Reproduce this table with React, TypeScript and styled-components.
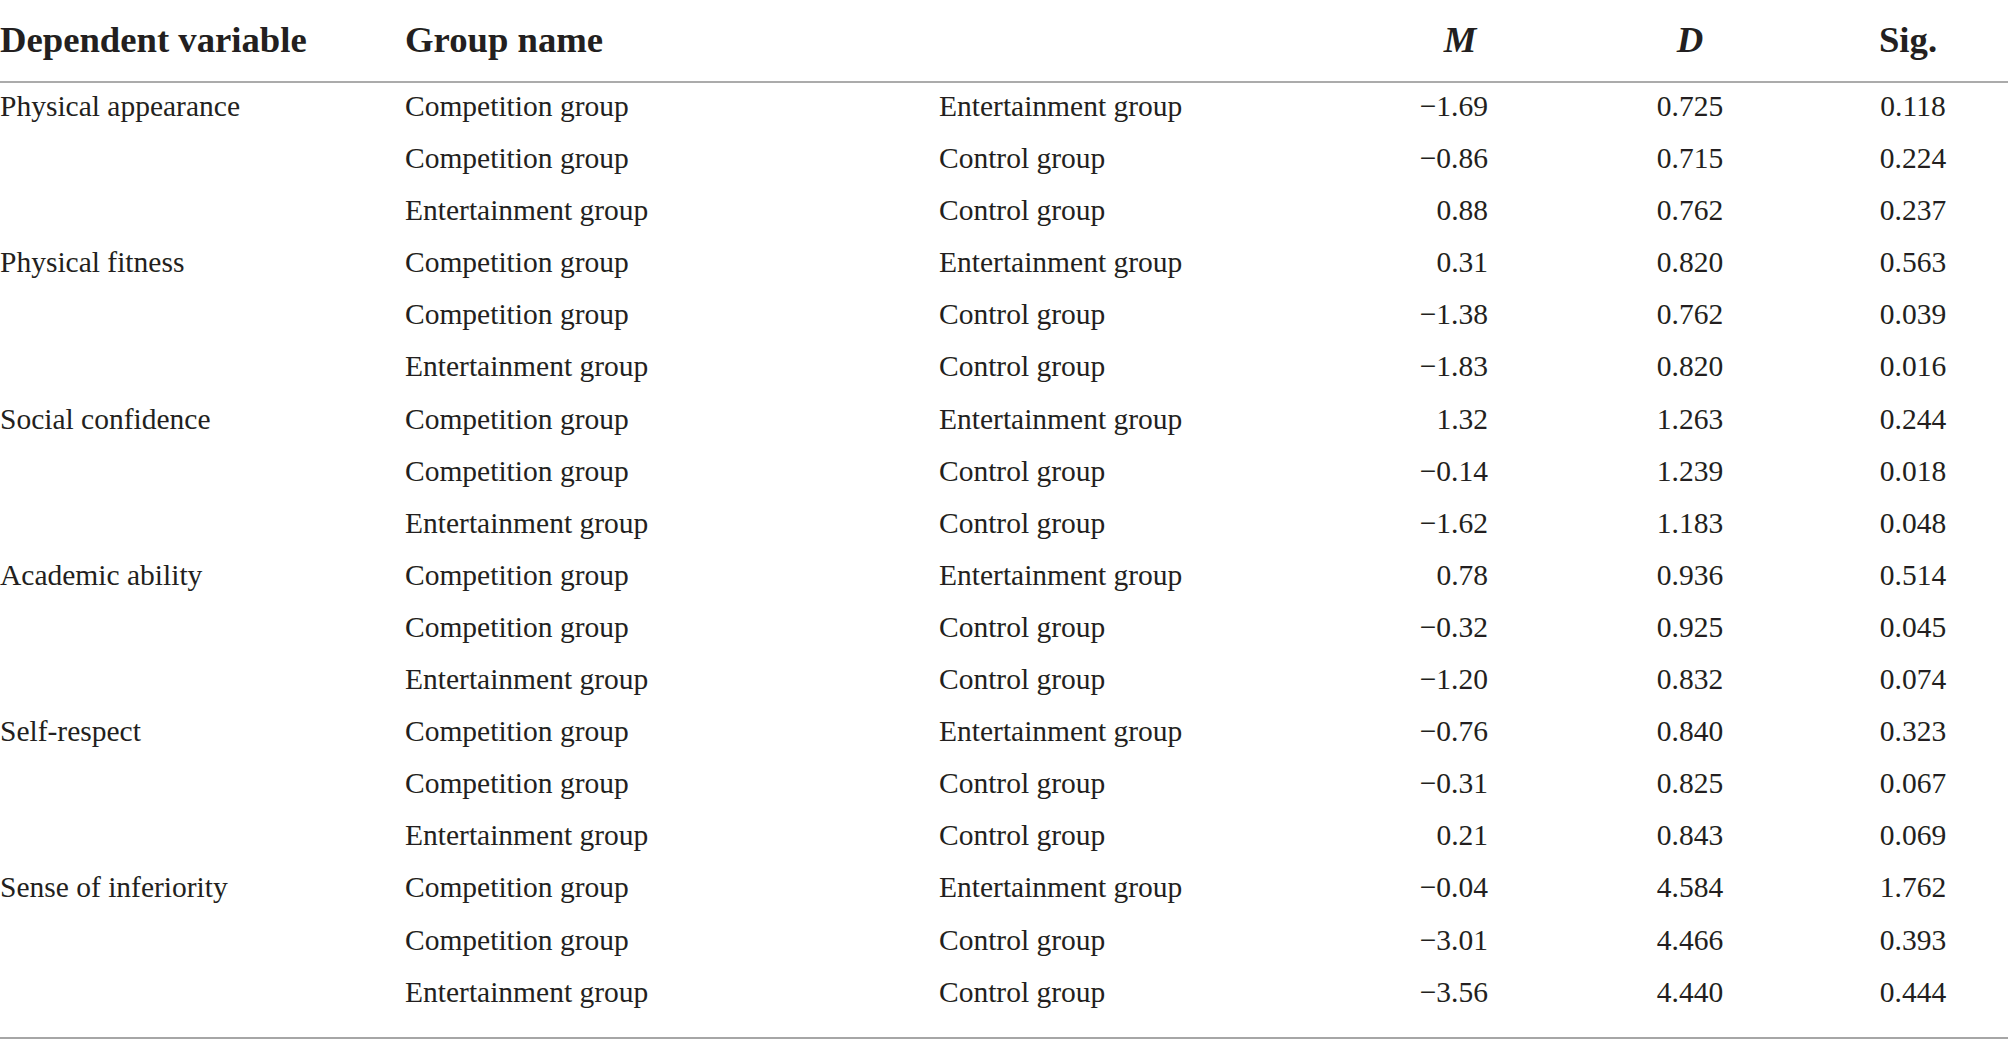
import React from 'react'
import styled, { createGlobalStyle } from 'styled-components'

const GlobalStyle = createGlobalStyle`
  html, body {
    margin: 0;
    padding: 0;
    background: #fff;
  }
  body {
    font-family: "Liberation Serif", "Times New Roman", serif;
    color: #231f20;
  }
`

const Frame = styled.div`
  width: 2008px;
  padding-bottom: 16px;
  border-bottom: 2px solid #a6a6a6;
`

const Table = styled.table`
  width: 100%;
  table-layout: fixed;
  border-collapse: collapse;
  border-spacing: 0;
`

type Align = 'left' | 'center' | 'right'

const HeadCell = styled.th<{ $align?: Align; $italic?: boolean; $pr?: number }>`
  padding: 20px ${(p) => p.$pr ?? 0}px 21px 0;
  line-height: 40px;
  font-size: 36.7px;
  font-weight: bold;
  font-style: ${(p) => (p.$italic ? 'italic' : 'normal')};
  text-align: ${(p) => p.$align ?? 'left'};
  white-space: nowrap;
  border-bottom: 2px solid #ababab;
`

const Cell = styled.td<{ $align?: Align; $pr?: number }>`
  padding: 1px ${(p) => p.$pr ?? 0}px 7px 0;
  line-height: 44.1px;
  font-size: 29.5px;
  text-align: ${(p) => p.$align ?? 'left'};
  white-space: nowrap;
  vertical-align: top;
`

type Row = { a: string; b: string; m: string; d: string; sig: string }
type Group = { name: string; rows: Row[] }

const COMP = 'Competition group'
const ENT = 'Entertainment group'
const CTRL = 'Control group'

const data: Group[] = [
  {
    name: 'Physical appearance',
    rows: [
      { a: COMP, b: ENT, m: '−1.69', d: '0.725', sig: '0.118' },
      { a: COMP, b: CTRL, m: '−0.86', d: '0.715', sig: '0.224' },
      { a: ENT, b: CTRL, m: '0.88', d: '0.762', sig: '0.237' },
    ],
  },
  {
    name: 'Physical fitness',
    rows: [
      { a: COMP, b: ENT, m: '0.31', d: '0.820', sig: '0.563' },
      { a: COMP, b: CTRL, m: '−1.38', d: '0.762', sig: '0.039' },
      { a: ENT, b: CTRL, m: '−1.83', d: '0.820', sig: '0.016' },
    ],
  },
  {
    name: 'Social confidence',
    rows: [
      { a: COMP, b: ENT, m: '1.32', d: '1.263', sig: '0.244' },
      { a: COMP, b: CTRL, m: '−0.14', d: '1.239', sig: '0.018' },
      { a: ENT, b: CTRL, m: '−1.62', d: '1.183', sig: '0.048' },
    ],
  },
  {
    name: 'Academic ability',
    rows: [
      { a: COMP, b: ENT, m: '0.78', d: '0.936', sig: '0.514' },
      { a: COMP, b: CTRL, m: '−0.32', d: '0.925', sig: '0.045' },
      { a: ENT, b: CTRL, m: '−1.20', d: '0.832', sig: '0.074' },
    ],
  },
  {
    name: 'Self-respect',
    rows: [
      { a: COMP, b: ENT, m: '−0.76', d: '0.840', sig: '0.323' },
      { a: COMP, b: CTRL, m: '−0.31', d: '0.825', sig: '0.067' },
      { a: ENT, b: CTRL, m: '0.21', d: '0.843', sig: '0.069' },
    ],
  },
  {
    name: 'Sense of inferiority',
    rows: [
      { a: COMP, b: ENT, m: '−0.04', d: '4.584', sig: '1.762' },
      { a: COMP, b: CTRL, m: '−3.01', d: '4.466', sig: '0.393' },
      { a: ENT, b: CTRL, m: '−3.56', d: '4.440', sig: '0.444' },
    ],
  },
]

const App = () => (
  <>
    <GlobalStyle />
    <Frame>
      <Table>
        <colgroup>
          <col style={{ width: 405 }} />
          <col style={{ width: 534 }} />
          <col style={{ width: 441 }} />
          <col style={{ width: 160 }} />
          <col style={{ width: 300 }} />
          <col style={{ width: 168 }} />
        </colgroup>
        <thead>
          <tr>
            <HeadCell>Dependent variable</HeadCell>
            <HeadCell>Group name</HeadCell>
            <HeadCell />
            <HeadCell $align="center" $italic>M</HeadCell>
            <HeadCell $align="center" $italic>D</HeadCell>
            <HeadCell $align="center" $pr={32}>Sig.</HeadCell>
          </tr>
        </thead>
        <tbody>
          {data.map((g) =>
            g.rows.map((r, i) => (
              <tr key={g.name + i}>
                <Cell>{i === 0 ? g.name : ''}</Cell>
                <Cell>{r.a}</Cell>
                <Cell>{r.b}</Cell>
                <Cell $align="right" $pr={52}>{r.m}</Cell>
                <Cell $align="center">{r.d}</Cell>
                <Cell $align="center" $pr={22}>{r.sig}</Cell>
              </tr>
            ))
          )}
        </tbody>
      </Table>
    </Frame>
  </>
)

export default App
